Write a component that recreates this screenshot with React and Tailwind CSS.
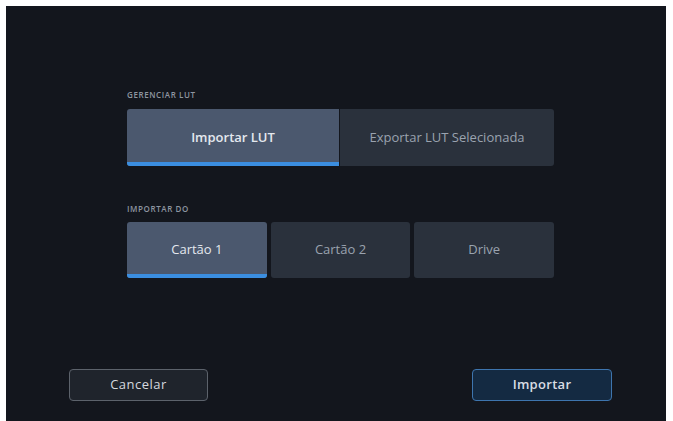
export default function App() {
  const font = { fontFamily: '"Open Sans", "Noto Sans", sans-serif' }
  return (
    <div className="w-[673px] h-[421px] bg-white pt-[6px] pl-[6px] pr-[7px] overflow-hidden" style={font}>
      <div className="h-[415px] bg-[#13161d] flex flex-col">
        <div className="ml-[121px] w-[427px] pt-[84px]">
          <p className="text-[8px] leading-[10px] tracking-[0.6px] font-semibold text-[#8e95a0] uppercase">Gerenciar LUT</p>
          <div className="mt-[9px] flex gap-[1px] h-[57px]">
            <button className="relative w-[212px] rounded-l-[3px] bg-[#4b586e] text-[13px] font-semibold text-[#e4e8ee] overflow-hidden">
              Importar LUT
              <span className="absolute left-0 right-0 bottom-0 h-[4px] bg-[#3b8ee0]" />
            </button>
            <button className="flex-1 rounded-r-[3px] bg-[#2a313c] text-[13px] font-medium text-[#9aa3af]">
              Exportar LUT Selecionada
            </button>
          </div>

          <p className="mt-[38px] text-[8px] leading-[10px] tracking-[0.6px] font-semibold text-[#8e95a0] uppercase">Importar do</p>
          <div className="mt-[8px] grid grid-cols-3 gap-[4px] h-[56px]">
            <button className="relative rounded-[3px] bg-[#4b586e] text-[13px] font-medium text-[#e4e8ee] overflow-hidden">
              Cartão 1
              <span className="absolute left-0 right-0 bottom-0 h-[4px] bg-[#3b8ee0]" />
            </button>
            <button className="rounded-[3px] bg-[#2a313c] text-[13px] font-medium text-[#9aa3af]">Cartão 2</button>
            <button className="rounded-[3px] bg-[#2a313c] text-[13px] font-medium text-[#9aa3af]">Drive</button>
          </div>
        </div>

        <div className="mt-auto mb-[20px] flex justify-between pl-[63px] pr-[54px]">
          <button className="w-[139px] h-[32px] rounded-[4px] border border-[#5c626b] bg-[#1f242c] text-[13px] font-medium tracking-[0.5px] text-[#d5d9df]">
            Cancelar
          </button>
          <button className="w-[140px] h-[32px] rounded-[4px] border border-[#3e75ae] bg-[#142a42] text-[13px] font-semibold tracking-[0.3px] text-[#d8dde4]">
            Importar
          </button>
        </div>
      </div>
    </div>
  )
}
